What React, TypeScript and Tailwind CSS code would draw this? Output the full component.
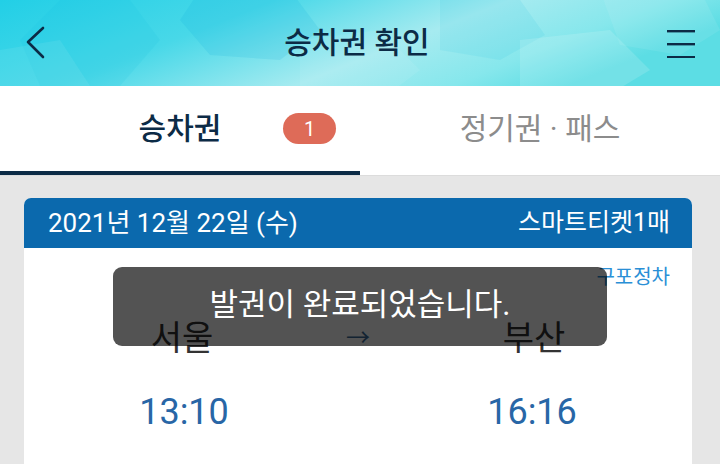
import React from "react";

const HeaderPattern = () => (
  <svg className="absolute inset-0 h-full w-full" viewBox="0 0 720 86" preserveAspectRatio="none">
    <defs>
      <linearGradient id="hdr" x1="0" y1="0" x2="1" y2="0.3">
        <stop offset="0" stopColor="#22cfe6" />
        <stop offset="0.35" stopColor="#48d8e8" />
        <stop offset="0.65" stopColor="#a6ebf0" />
        <stop offset="0.85" stopColor="#86e7ec" />
        <stop offset="1" stopColor="#5cdde4" />
      </linearGradient>
    </defs>
    <rect width="720" height="86" fill="url(#hdr)" />
    <polygon points="60,0 130,0 160,40 120,86 40,86 20,40" fill="#10bce0" opacity="0.12" />
    <polygon points="200,-10 290,-10 320,30 280,60 210,55 180,20" fill="#0aa8db" opacity="0.14" />
    <polygon points="300,40 380,30 420,70 380,100 300,100" fill="#ffffff" opacity="0.07" />
    <polygon points="440,-5 520,0 545,35 500,60 440,50" fill="#0fb8df" opacity="0.1" />
    <polygon points="520,40 610,30 650,70 600,100 520,100" fill="#ffffff" opacity="0.14" />
    <polygon points="600,-10 700,-10 720,30 680,55 620,45" fill="#ffffff" opacity="0.08" />
    <polygon points="0,50 60,40 90,86 0,86" fill="#ffffff" opacity="0.07" />
  </svg>
);

const TopBar = () => (
  <div className="relative h-[86px] overflow-hidden">
    <HeaderPattern />
    <div className="relative flex h-full items-center justify-between px-[24px]">
      <svg width="24" height="34" viewBox="0 0 24 34" className="ml-[1px]">
        <path d="M18 2 L3 16 L18 31" fill="none" stroke="#0c2b46" strokeWidth="2.6" strokeLinecap="round" strokeLinejoin="round" />
      </svg>
      <h1 className="text-[30px] font-medium leading-none text-[#0c2b46]">승차권 확인</h1>
      <svg width="30" height="30" viewBox="0 0 30 30" className="mr-[1px]">
        <rect x="2" y="2" width="28" height="2.4" fill="#0c2b46" />
        <rect x="2" y="15" width="28" height="2.4" fill="#0c2b46" />
        <rect x="2" y="28" width="28" height="2.4" fill="#0c2b46" />
      </svg>
    </div>
  </div>
);

const Tabs = () => (
  <div className="flex h-[90px] border-b border-[#dcdcdc] bg-white">
    <div className="relative flex w-1/2 items-center justify-center border-b-4 border-[#0c2b46]">
      <span className="text-[30px] font-medium text-[#0c2b46]">승차권</span>
      <span className="absolute left-[283px] top-[27px] flex h-[31px] w-[53px] items-center justify-center rounded-full bg-[#de6b58] text-[20px] text-white">
        1
      </span>
    </div>
    <div className="flex w-1/2 items-center justify-center pb-[4px]">
      <span className="text-[30px] text-[#8c8c8c]">정기권 · 패스</span>
    </div>
  </div>
);

const TicketCard = () => (
  <div className="ml-[24px] mr-[28px] mt-[22px] overflow-hidden rounded-t-[7px] bg-white">
    <div className="flex h-[50px] items-center justify-between bg-[#0b69ad] pl-[24px] pr-[22px] text-white">
      <span className="text-[26px]">2021년 12월 22일 (수)</span>
      <span className="text-[25px]">스마트티켓1매</span>
    </div>
    <div className="pb-[40px] pt-[16px]">
      <div className="pr-[22px] text-right text-[20px] leading-[26px] text-[#2a8fd6]">구포정차</div>
      <div className="mt-[26px] grid grid-cols-[200px_1fr_200px] items-center px-[58px]">
        <span className="text-center text-[34px] leading-[44px] text-[#333333]">서울</span>
        <span className="text-center text-[24px] leading-[44px] text-[#3d6d99]">→</span>
        <span className="text-center text-[34px] leading-[44px] text-[#333333]">부산</span>
      </div>
      <div className="mt-[30px] grid grid-cols-[200px_1fr_200px] items-center px-[60px]">
        <span className="text-center text-[36px] leading-[44px] text-[#2866a6]">13:10</span>
        <span />
        <span className="text-center text-[36px] leading-[44px] text-[#2866a6]">16:16</span>
      </div>
    </div>
  </div>
);

const Toast = () => (
  <div className="absolute left-1/2 top-[267px] flex h-[79px] w-[494px] -translate-x-1/2 items-center justify-center rounded-[9px] bg-[rgba(0,0,0,0.675)]">
    <span className="pb-[2px] text-[31px] text-white">발권이 완료되었습니다.</span>
  </div>
);

const App = () => {
  return (
    <div className="relative h-[464px] w-[720px] overflow-hidden bg-[#e6e6e6] font-['Roboto','Noto_Sans_CJK_KR',sans-serif]">
      <TopBar />
      <Tabs />
      <TicketCard />
      <Toast />
    </div>
  );
};

export default App;
